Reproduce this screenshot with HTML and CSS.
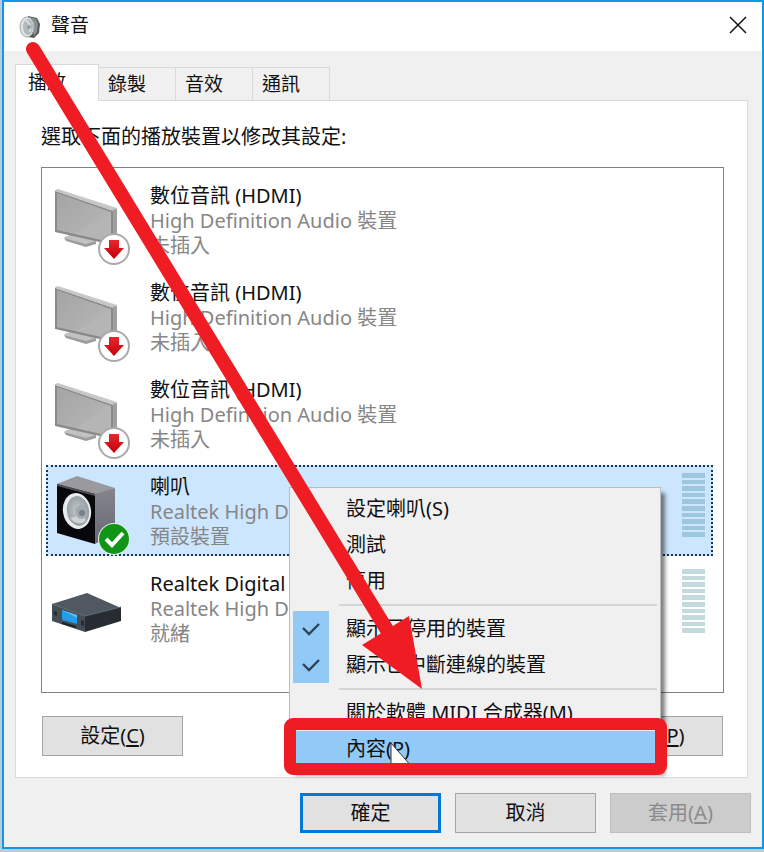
FILE: index.html
```html
<!DOCTYPE html>
<html lang="zh-Hant">
<head>
<meta charset="utf-8">
<title>聲音</title>
<link rel="stylesheet" href="styles.css">
</head>
<body>
<svg class="defs" width="0" height="0" aria-hidden="true">
  <defs>
    <linearGradient id="screen" x1="0" y1="0" x2="1" y2="1"><stop offset="0" stop-color="#a4a4a4"/><stop offset="1" stop-color="#b9b9b9"/></linearGradient>
    <linearGradient id="arrowRed" x1="0" y1="0" x2="0" y2="1"><stop offset="0" stop-color="#e8272c"/><stop offset="1" stop-color="#c3000b"/></linearGradient>
    <linearGradient id="side" x1="0" y1="0" x2="0" y2="1"><stop offset="0" stop-color="#85858d"/><stop offset="1" stop-color="#696974"/></linearGradient>
    <radialGradient id="cone"><stop offset="0" stop-color="#8f979c"/><stop offset=".3" stop-color="#b9c0c4"/><stop offset="1" stop-color="#989fa4"/></radialGradient>
    <symbol id="monitor" viewBox="0 0 80 84">
      <path d="M14 56l12-4 20 5v4l-9 3-21-6z" fill="#c2c2c2"/>
      <path d="M14 57l22 6 10-3v3l-10 3-20-6z" fill="#9d9d9d"/>
      <path d="M5 9l3-1 59 19v3l-3 32-4 1z" fill="#c9c9c9"/>
      <path d="M62 29l5-1v34l-5 2z" fill="#a0a0a0"/>
      <path d="M5 9l58 20v35L5 51z" fill="#8a8a8a"/>
      <path d="M7 12l54 19v30L7 49z" fill="url(#screen)"/>
      <path d="M61 31L26 53l35 8z" fill="#b5b5b5"/>
      <path d="M5 9l58 20v1L5 10z" fill="#d9d9d9"/>
      <circle cx="64" cy="68" r="15" fill="#fff" stroke="#a9a9ac" stroke-width="2"/>
      <path d="M59 59h10v8h5L64 78 54 67h5z" fill="url(#arrowRed)"/>
    </symbol>
    <symbol id="speaker" viewBox="0 0 80 84">
      <path d="M7 13L27 5l38 12-19 7z" fill="#99999e"/>
      <path d="M45 23l20-6v45L45 73z" fill="url(#side)"/>
      <path d="M7 13l38 10v50L7 62z" fill="#08080a"/>
      <path d="M7 13l38 10v2L7 15z" fill="#4d4d53"/>
      <ellipse cx="27" cy="40" rx="14" ry="18" transform="rotate(-10 27 40)" fill="#e6ebed"/>
      <ellipse cx="28" cy="40" rx="11" ry="15" transform="rotate(-10 28 40)" fill="url(#cone)"/>
      <path d="M20 47c5 6 12 7 16 2l-4-5z" fill="#ccd2d5"/>
      <ellipse cx="31" cy="41" rx="5" ry="7" fill="#a2aaaf"/><circle cx="32" cy="42" r="3" fill="#778087"/>
      <circle cx="64" cy="68" r="16" fill="#e3efe6"/><circle cx="64" cy="68" r="15" fill="#109516"/>
      <path d="M56 68l6 6 11-12" fill="none" stroke="#fff" stroke-width="4"/>
    </symbol>
    <symbol id="box" viewBox="0 0 80 84">
      <path d="M2 35L37 24l34 15-36 9z" fill="#505962"/>
      <path d="M2 35l33 12v16L2 52z" fill="#454e56"/>
      <path d="M35 47l36-9v14L35 63z" fill="#272b32"/>
      <path d="M2 35l33 12 36-9" fill="none" stroke="#626b74"/>
      <path d="M12 41l15 5v9l-15-4z" fill="#249ceb"/><path d="M12 41l15 5v3z" fill="#5ebaf2"/>
      <path d="M12 53l14 4v2l-14-4z" fill="#1b2025"/>
      <path d="M4 42l3 1v4l-3-1zM31 51l3 1v5l-3-1z" fill="#242a30"/>
    </symbol>
  </defs>
</svg>
<main class="dialog">
  <header class="titlebar">
    <svg class="app-icon" viewBox="0 0 22 24" aria-hidden="true">
      <path d="M9 1l9 2 3 6-1 9-5 5-6-1z" fill="#55595c"/><path d="M11 2l6 2 2 5-1 8-3 4z" fill="#8a8f92"/>
      <ellipse cx="8" cy="12" rx="7" ry="10" fill="#dfe3e4" stroke="#a4a8aa"/><ellipse cx="9" cy="12" rx="5" ry="8" fill="#b3babd"/><path d="M6 5c5 2 6 6 5 12" fill="none" stroke="#d6dadc" stroke-width="2"/><circle cx="10" cy="12" r="2" fill="#949da1"/>
    </svg>
    <h1>聲音</h1>
    <button class="close" type="button" aria-label="關閉"><svg viewBox="0 0 18 18"><path d="M1 1l16 16M17 1L1 17" stroke="#111" stroke-width="1.5"/></svg></button>
  </header>
  <div class="client">
    <div class="tabs" role="tablist">
      <button class="tab active" type="button" role="tab" aria-selected="true">播放</button>
      <button class="tab" type="button" role="tab">錄製</button>
      <button class="tab" type="button" role="tab">音效</button>
      <button class="tab" type="button" role="tab">通訊</button>
    </div>
    <section class="panel">
      <p class="caption">選取下面的播放裝置以修改其設定:</p>
      <ul class="devices">
        <li class="device"><svg class="pic"><use href="#monitor"/></svg><div class="info"><strong>數位音訊 (HDMI)</strong><span>High Definition Audio 裝置</span><span>未插入</span></div></li>
        <li class="device"><svg class="pic"><use href="#monitor"/></svg><div class="info"><strong>數位音訊 (HDMI)</strong><span>High Definition Audio 裝置</span><span>未插入</span></div></li>
        <li class="device"><svg class="pic"><use href="#monitor"/></svg><div class="info"><strong>數位音訊 (HDMI)</strong><span>High Definition Audio 裝置</span><span>未插入</span></div></li>
        <li class="device selected"><svg class="pic"><use href="#speaker"/></svg><div class="info"><strong>喇叭</strong><span>Realtek High D</span><span>預設裝置</span></div>
          <div class="meter"><i></i><i></i><i></i><i></i><i></i><i></i><i></i><i></i><i></i><i></i></div></li>
        <li class="device"><svg class="pic"><use href="#box"/></svg><div class="info"><strong>Realtek Digital</strong><span>Realtek High D</span><span>就緒</span></div>
          <div class="meter"><i></i><i></i><i></i><i></i><i></i><i></i><i></i><i></i><i></i><i></i></div></li>
      </ul>
      <div class="actions">
        <button class="btn" type="button">設定(<u>C</u>)</button>
        <button class="btn" type="button">內容(<u>P</u>)</button>
      </div>
    </section>
    <footer class="footer">
      <button class="btn default" type="button">確定</button>
      <button class="btn" type="button">取消</button>
      <button class="btn" type="button" disabled>套用(<u>A</u>)</button>
    </footer>
  </div>
</main>
<div class="menu" role="menu">
  <button class="item" type="button" role="menuitem">設定喇叭(S)</button>
  <button class="item" type="button" role="menuitem">測試</button>
  <button class="item" type="button" role="menuitem">停用</button>
  <hr>
  <button class="item" type="button" role="menuitemcheckbox" aria-checked="true"><span class="tick"><svg viewBox="0 0 18 14"><path d="M1 6l6 6 10-10" fill="none" stroke="#2b4459" stroke-width="2.4"/></svg></span>顯示已停用的裝置</button>
  <button class="item" type="button" role="menuitemcheckbox" aria-checked="true"><span class="tick"><svg viewBox="0 0 18 14"><path d="M1 6l6 6 10-10" fill="none" stroke="#2b4459" stroke-width="2.4"/></svg></span>顯示已中斷連線的裝置</button>
  <hr>
  <button class="item" type="button" role="menuitem">關於軟體 MIDI 合成器(M)</button>
  <button class="item hot" type="button" role="menuitem">內容(P)</button>
</div>
<svg class="marks" width="764" height="852" viewBox="0 0 764 852" aria-hidden="true">
  <path d="M391 743v24h21z" fill="#fff" stroke="#333"/>
  <path d="M33 49L387 630" stroke="#ef1c24" stroke-width="14" stroke-linecap="round"/>
  <path d="M362 645L409 616 422 689z" fill="#ef1c24"/>
  <rect x="290" y="724" width="371" height="45" rx="3" fill="none" stroke="#ef1c24" stroke-width="12"/>
</svg>
</body>
</html>
```
FILE: styles.css
```css
* { box-sizing: border-box; }

body {
  margin: 0;
  min-height: 100vh;
  padding: 0 0 3px 2px;
  display: flex;
  position: relative;
  background: #b5cde4;
  font: 20px/24px "Noto Sans", "Noto Sans CJK TC", sans-serif;
  color: #111;
}

button { font: inherit; color: inherit; }
.defs { position: absolute; }

.dialog {
  flex: 1;
  display: flex;
  flex-direction: column;
  border: 2px solid #1496e2;
  background: #f0f0f0;
}

.titlebar {
  display: flex;
  align-items: center;
  height: 49px;
  padding: 0 15px;
  background: #fff;
}
.app-icon { width: 22px; height: 24px; margin-right: 10px; }
h1 { flex: 1; margin: 0; padding-bottom: 4px; font-size: 19px; font-weight: 400; }
.close { display: flex; margin-bottom: 4px; padding: 0; border: 0; background: none; }
.close svg { width: 18px; height: 18px; }

.client {
  flex: 1;
  display: flex;
  flex-direction: column;
  padding: 13px 11px 14px;
}

.tabs { display: flex; align-items: flex-end; }
.tab {
  width: 77px;
  height: 33px;
  padding: 0 0 0 9px;
  text-align: left;
  font-size: 19px;
  border: 1px solid #d9d9d9;
  border-width: 1px 1px 0 0;
  background: #f0f0f0;
}
.tab.active {
  width: 84px;
  height: 37px;
  margin-bottom: -1px;
  padding: 0 0 3px 12px;
  border-left-width: 1px;
  background: #fff;
  z-index: 1;
}

.panel {
  flex: 1;
  display: flex;
  flex-direction: column;
  margin-right: 3px;
  padding: 24px 23px 21px 25px;
  border: 1px solid #d9d9d9;
  background: #fff;
}
.caption { margin: 0 0 18px; }

.devices {
  flex: 1;
  display: flex;
  flex-direction: column;
  gap: 6px;
  margin: 0;
  padding: 6px 10px 6px 4px;
  border: 1px solid #828282;
  list-style: none;
}
.device {
  display: flex;
  height: 91px;
  padding: 0 7px;
  border: 1px solid transparent;
}
.device.selected { border: 2px dotted #17375a; padding: 0 6px; background: #cce6ff; }
.pic { width: 80px; height: 84px; margin: 6px 20px 0 -4px; }
.info { flex: 1; display: flex; flex-direction: column; padding-top: 8px; line-height: 25px; color: #868686; }
.info strong { font-weight: 400; color: #111; }
.selected .info { padding-top: 7px; }
.selected .pic { margin-top: 4px; }

.meter {
  display: flex;
  flex-direction: column;
  gap: 2px;
  width: 23px;
  height: 64px;
  margin-top: 6px;
}
.meter i { flex: 1; background: #c3dadf; }
.selected .meter i { background: #9cc7df; }

.actions { display: flex; justify-content: space-between; margin: 23px 1px 0; }
.btn {
  width: 141px;
  height: 40px;
  padding: 0;
  border: 1px solid #a5a5a5;
  background: #e1e1e1;
}
.btn u { text-underline-offset: 2px; }
.btn.default { border: 3px solid #0078d7; }
.btn:disabled { border-color: #bfbfbf; background: #ccc; color: #8b8b8b; }
.footer { display: flex; justify-content: flex-end; gap: 14px; padding-top: 15px; }

.menu {
  position: absolute;
  z-index: 2;
  left: 289px;
  top: 487px;
  width: 372px;
  padding: 3px;
  border: 1px solid #bcbcbc;
  background: #f0f0f0;
  box-shadow: 5px 5px 4px -1px rgba(0, 0, 0, .5);
}
.item {
  display: flex;
  align-items: center;
  width: 100%;
  height: 36px;
  padding: 0 0 0 53px;
  border: 0;
  background: none;
}
.item.hot { background: #91c9f7; }
.tick {
  display: flex;
  align-items: center;
  justify-content: center;
  width: 36px;
  height: 36px;
  margin: 0 17px 0 -53px;
  background: #91c9f7;
}
.tick svg { width: 18px; height: 14px; }
.menu hr { height: 2px; margin: 5px 0 5px 46px; border: 0; background: #d5d5d5; }

.marks { position: absolute; z-index: 3; left: 0; top: 0; pointer-events: none; }
```
